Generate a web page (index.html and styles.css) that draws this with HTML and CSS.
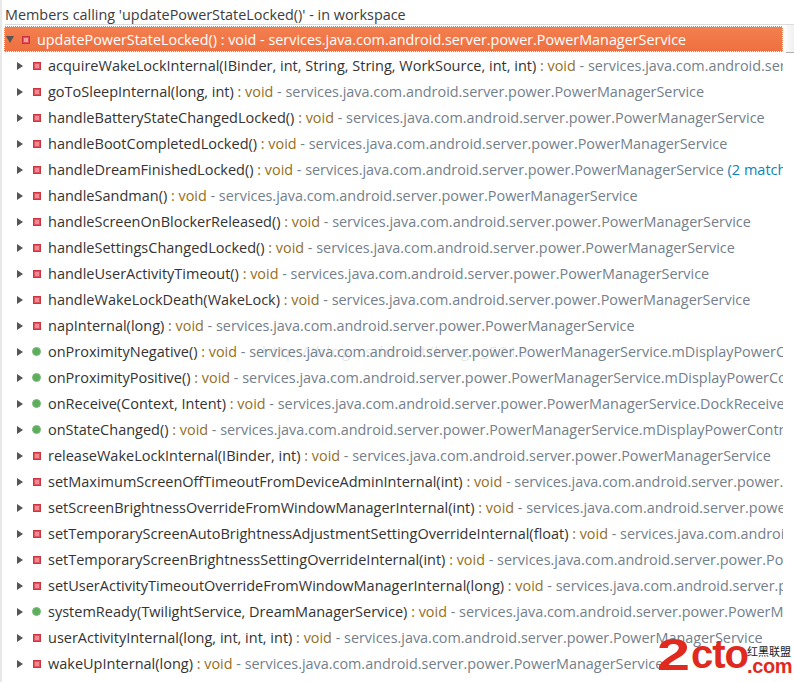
FILE: index.html
```html
<!DOCTYPE html>
<html lang="en">
<head>
<meta charset="utf-8">
<title>Members calling</title>
<link rel="stylesheet" href="styles.css">
</head>
<body>
<div class="view">
  <div class="header">Members calling 'updatePowerStateLocked()' - in workspace</div>
  <div class="tree">
    <div class="row root"><span class="tw open"></span><span class="ico m"></span><span class="name">updatePowerStateLocked()</span><span> : void - services.java.com.android.server.power.PowerManagerService</span></div>
    <div class="row"><span class="tw"></span><span class="ico m"></span><span class="name">acquireWakeLockInternal(IBinder, int, String, String, WorkSource, int, int)</span><span class="ty"> : void</span><span class="q"> - services.java.com.android.server.power.PowerManagerService</span></div>
    <div class="row"><span class="tw"></span><span class="ico m"></span><span class="name">goToSleepInternal(long, int)</span><span class="ty"> : void</span><span class="q"> - services.java.com.android.server.power.PowerManagerService</span></div>
    <div class="row"><span class="tw"></span><span class="ico m"></span><span class="name">handleBatteryStateChangedLocked()</span><span class="ty"> : void</span><span class="q"> - services.java.com.android.server.power.PowerManagerService</span></div>
    <div class="row"><span class="tw"></span><span class="ico m"></span><span class="name">handleBootCompletedLocked()</span><span class="ty"> : void</span><span class="q"> - services.java.com.android.server.power.PowerManagerService</span></div>
    <div class="row"><span class="tw"></span><span class="ico m"></span><span class="name">handleDreamFinishedLocked()</span><span class="ty"> : void</span><span class="q"> - services.java.com.android.server.power.PowerManagerService</span><span class="match"> (2 matches)</span></div>
    <div class="row"><span class="tw"></span><span class="ico m"></span><span class="name">handleSandman()</span><span class="ty"> : void</span><span class="q"> - services.java.com.android.server.power.PowerManagerService</span></div>
    <div class="row"><span class="tw"></span><span class="ico m"></span><span class="name">handleScreenOnBlockerReleased()</span><span class="ty"> : void</span><span class="q"> - services.java.com.android.server.power.PowerManagerService</span></div>
    <div class="row"><span class="tw"></span><span class="ico m"></span><span class="name">handleSettingsChangedLocked()</span><span class="ty"> : void</span><span class="q"> - services.java.com.android.server.power.PowerManagerService</span></div>
    <div class="row"><span class="tw"></span><span class="ico m"></span><span class="name">handleUserActivityTimeout()</span><span class="ty"> : void</span><span class="q"> - services.java.com.android.server.power.PowerManagerService</span></div>
    <div class="row"><span class="tw"></span><span class="ico m"></span><span class="name">handleWakeLockDeath(WakeLock)</span><span class="ty"> : void</span><span class="q"> - services.java.com.android.server.power.PowerManagerService</span></div>
    <div class="row"><span class="tw"></span><span class="ico m"></span><span class="name">napInternal(long)</span><span class="ty"> : void</span><span class="q"> - services.java.com.android.server.power.PowerManagerService</span></div>
    <div class="row"><span class="tw"></span><span class="ico p"></span><span class="name">onProximityNegative()</span><span class="ty"> : void</span><span class="q"> - services.java.com.android.server.power.PowerManagerService.mDisplayPowerControllerCallbacks</span></div>
    <div class="row"><span class="tw"></span><span class="ico p"></span><span class="name">onProximityPositive()</span><span class="ty"> : void</span><span class="q"> - services.java.com.android.server.power.PowerManagerService.mDisplayPowerControllerCallbacks</span></div>
    <div class="row"><span class="tw"></span><span class="ico p"></span><span class="name">onReceive(Context, Intent)</span><span class="ty"> : void</span><span class="q"> - services.java.com.android.server.power.PowerManagerService.DockReceiver</span></div>
    <div class="row"><span class="tw"></span><span class="ico p"></span><span class="name">onStateChanged()</span><span class="ty"> : void</span><span class="q"> - services.java.com.android.server.power.PowerManagerService.mDisplayPowerControllerCallbacks</span></div>
    <div class="row"><span class="tw"></span><span class="ico m"></span><span class="name">releaseWakeLockInternal(IBinder, int)</span><span class="ty"> : void</span><span class="q"> - services.java.com.android.server.power.PowerManagerService</span></div>
    <div class="row"><span class="tw"></span><span class="ico m"></span><span class="name">setMaximumScreenOffTimeoutFromDeviceAdminInternal(int)</span><span class="ty"> : void</span><span class="q"> - services.java.com.android.server.power.PowerManagerService</span></div>
    <div class="row"><span class="tw"></span><span class="ico m"></span><span class="name">setScreenBrightnessOverrideFromWindowManagerInternal(int)</span><span class="ty"> : void</span><span class="q"> - services.java.com.android.server.power.PowerManagerService</span></div>
    <div class="row"><span class="tw"></span><span class="ico m"></span><span class="name">setTemporaryScreenAutoBrightnessAdjustmentSettingOverrideInternal(float)</span><span class="ty"> : void</span><span class="q"> - services.java.com.android.server.power.PowerManagerService</span></div>
    <div class="row"><span class="tw"></span><span class="ico m"></span><span class="name">setTemporaryScreenBrightnessSettingOverrideInternal(int)</span><span class="ty"> : void</span><span class="q"> - services.java.com.android.server.power.PowerManagerService</span></div>
    <div class="row"><span class="tw"></span><span class="ico m"></span><span class="name">setUserActivityTimeoutOverrideFromWindowManagerInternal(long)</span><span class="ty"> : void</span><span class="q"> - services.java.com.android.server.power.PowerManagerService</span></div>
    <div class="row"><span class="tw"></span><span class="ico p"></span><span class="name">systemReady(TwilightService, DreamManagerService)</span><span class="ty"> : void</span><span class="q"> - services.java.com.android.server.power.PowerManagerService</span></div>
    <div class="row"><span class="tw"></span><span class="ico m"></span><span class="name">userActivityInternal(long, int, int, int)</span><span class="ty"> : void</span><span class="q"> - services.java.com.android.server.power.PowerManagerService</span></div>
    <div class="row"><span class="tw"></span><span class="ico m"></span><span class="name">wakeUpInternal(long)</span><span class="ty"> : void</span><span class="q"> - services.java.com.android.server.power.PowerManagerService</span></div>
  </div>
</div>
<div class="corner"></div>
<div class="mark">http://blog.csdn.net/bingo_5210</div>
<div class="logo"><span class="logo-two">2</span><span class="logo-main">cto</span><span class="logo-cn">红黑联盟</span><span class="logo-com">.com</span></div>
</body>
</html>
```

FILE: styles.css
```css
html, body {
  margin: 0;
  padding: 0;
  width: 794px;
  height: 682px;
  overflow: hidden;
  background: #fff;
}
.view {
  height: 682px;
  box-sizing: border-box;
  padding-left: 2px;
  border-left: 2px solid #e8e8e8;
  font-family: "Open Sans", "Noto Sans", sans-serif;
  font-size: 14.5px;
  color: #333;
}
.header {
  height: 24px;
  line-height: 29px;
  font-size: 14.4px;
  margin-left: 1px;
  margin-bottom: 1px;
  border-bottom: 1px solid #dcdcdc;
  white-space: nowrap;
  color: #3c3c3c;
}
.tree {
  width: 779px;
  overflow: hidden;
}
.row {
  display: flex;
  align-items: center;
  box-sizing: border-box;
  height: 26px;
  padding-left: 13px;
  padding-top: 1px;
  white-space: nowrap;
  color: #333;
}
.row > span { flex: none; white-space: pre; }
.root {
  padding-left: 2px;
  font-size: 14.37px;
  background: linear-gradient(#f37f4f, #ee7040);
  color: #fff;
  outline: 1px dotted #fff;
  outline-offset: -1px;
}
.tw {
  width: 0;
  height: 0;
  border-left: 6px solid #555;
  border-top: 4px solid transparent;
  border-bottom: 4px solid transparent;
  margin-right: 10px;
}
.tw.open {
  border-left: 4px solid transparent;
  border-right: 4px solid transparent;
  border-top: 7px solid #555;
  border-bottom: 0;
  margin-right: 8px;
}
.ico { width: 8px; height: 8px; margin-right: 7px; box-sizing: border-box; }
.ico.m { background: #f08a94; border: 1px solid #cc3440; box-shadow: inset 0 0 0 1px #e4525e; }
.root .ico.m { background: #f49aa0; border-color: #c8303c; }
.ico.p { background: #5cae5c; border: 1px solid #78bc78; border-radius: 50%; width: 9px; height: 9px; margin-left: -1px; margin-right: 7px; }
.ty { color: #956f22; font-size: 14.4px; }
.q { color: #73808c; font-size: 14.4px; }
.match { color: #0a84b8; }
.corner {
  position: absolute;
  left: 786px;
  top: 25px;
  width: 8px;
  height: 27px;
  background: linear-gradient(90deg, #fafafa, #f0f0f0);
  border-bottom: 1px solid #b0b0b0;
}
.mark {
  position: absolute;
  left: 262px;
  top: 341px;
  font: 15px "Open Sans", sans-serif;
  letter-spacing: 1.4px;
  color: rgba(120, 120, 120, 0.2);
  white-space: nowrap;
}
.logo {
  position: absolute;
  left: 657px;
  top: 636px;
  width: 137px;
  height: 46px;
}
.logo-two {
  position: absolute;
  left: 0;
  top: -7px;
  font: bold 45px/52px "Liberation Sans", sans-serif;
  color: #e02a20;
  transform: scaleX(1.32);
  transform-origin: left top;
}
.logo-main {
  position: absolute;
  left: 34px;
  top: -8px;
  font: bold 40px/52px "Liberation Sans", sans-serif;
  letter-spacing: -1px;
  color: #e02a20;
}
.logo-cn {
  position: absolute;
  left: 90px;
  top: 8px;
  font: 11px/14px "Noto Sans CJK SC", sans-serif;
  color: #222;
}
.logo-com {
  position: absolute;
  left: 90px;
  top: 18px;
  font: bold 20px/24px "Liberation Sans", sans-serif;
  letter-spacing: -0.4px;
  color: #e02a20;
}
```
